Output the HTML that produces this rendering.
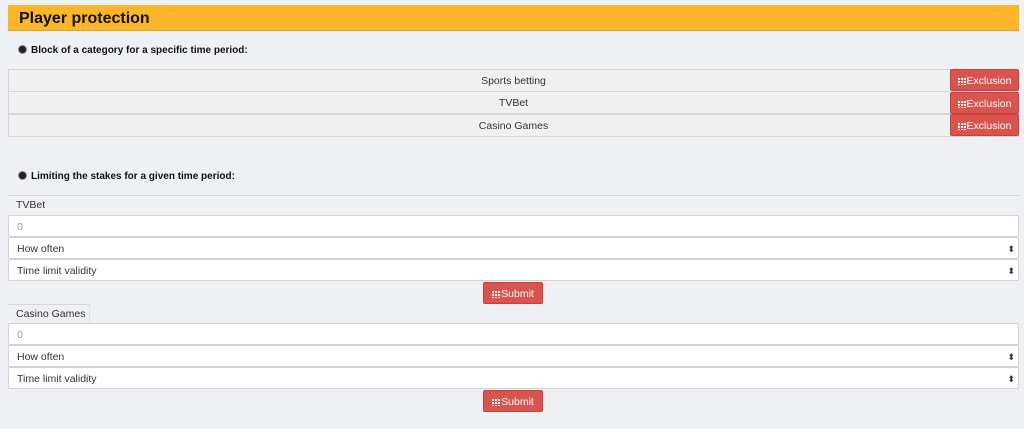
<!DOCTYPE html>
<html><head><style>
*{box-sizing:border-box;margin:0;padding:0}
body{width:1024px;height:429px;background:#eef0f3;font-family:"Liberation Sans",sans-serif;position:relative;overflow:hidden;color:#333}
.abs{position:absolute}
.hdr{left:8px;top:5px;width:1011px;height:26px;background:#fbb52b;border-bottom:1px solid #e5a020;font-weight:bold;font-size:16px;color:#111;padding:5px 0 0 11px}
.rad{font-size:10px;font-weight:bold;color:#111}
.rad:before{content:"";display:inline-block;width:7px;height:7px;border-radius:50%;background:#222;border:1px solid #888;margin-right:4px;vertical-align:-1px}
.row{left:8px;width:1011px;height:23px;background:#f0f0f0;border:1px solid #d6d6d6;font-size:10.5px;text-align:center;line-height:23px;color:#333}
.btn{background:#d9534f;color:#fff;font-size:10.5px;border-radius:2px;line-height:23px;height:22px;text-align:center;border:1px solid #c9403c}
.ico{display:inline-block;width:8px;height:7px;background:
linear-gradient(90deg,#fff 2px,transparent 2px,transparent 3px,#fff 3px,#fff 5px,transparent 5px,transparent 6px,#fff 6px);vertical-align:-1px;margin-right:1px;
-webkit-mask:linear-gradient(#000 2px,transparent 2px,transparent 3px,#000 3px,#000 5px,transparent 5px,transparent 6px,#000 6px)}
.inp{left:8px;width:1011px;height:22px;background:#fff;border:1px solid #d3d3d3;border-radius:2px;font-size:10.5px;line-height:23px;padding-left:8px;color:#333}
.arr:after{content:"⬍";position:absolute;right:3px;top:0;font-size:9px;color:#333}
.tab{font-size:10.5px;color:#333;padding-left:8px;line-height:19px;height:19px}
</style></head><body>
<div class="abs hdr">Player protection</div>
<div class="abs rad" style="left:18px;top:45px">Block of a category for a specific time period:</div>
<div class="abs row" style="top:69px">Sports betting</div>
<div class="abs row" style="top:91px">TVBet</div>
<div class="abs row" style="top:114px">Casino Games</div>
<div class="abs btn" style="left:950px;top:69px;width:69px"><span class="ico"></span>Exclusion</div>
<div class="abs btn" style="left:950px;top:92px;width:69px"><span class="ico"></span>Exclusion</div>
<div class="abs btn" style="left:950px;top:114px;width:69px"><span class="ico"></span>Exclusion</div>
<div class="abs rad" style="left:18px;top:171px">Limiting the stakes for a given time period:</div>
<div class="abs" style="left:8px;top:195px;width:1011px;height:20px;border-top:1px solid #d6d6d6"></div>
<div class="abs tab" style="left:8px;top:196px;width:80px">TVBet</div>
<div class="abs inp" style="top:215px;color:#999">0</div>
<div class="abs inp arr" style="top:237px">How often</div>
<div class="abs inp arr" style="top:259px">Time limit validity</div>
<div class="abs btn" style="left:483px;top:282px;width:60px"><span class="ico"></span>Submit</div>
<div class="abs tab" style="left:8px;top:304px;width:82px;border-top:1px solid #d6d6d6;border-right:1px solid #e3e3e3">Casino Games</div>
<div class="abs inp" style="top:323px;color:#999">0</div>
<div class="abs inp arr" style="top:345px">How often</div>
<div class="abs inp arr" style="top:367px">Time limit validity</div>
<div class="abs btn" style="left:483px;top:390px;width:60px"><span class="ico"></span>Submit</div>
</body></html>
